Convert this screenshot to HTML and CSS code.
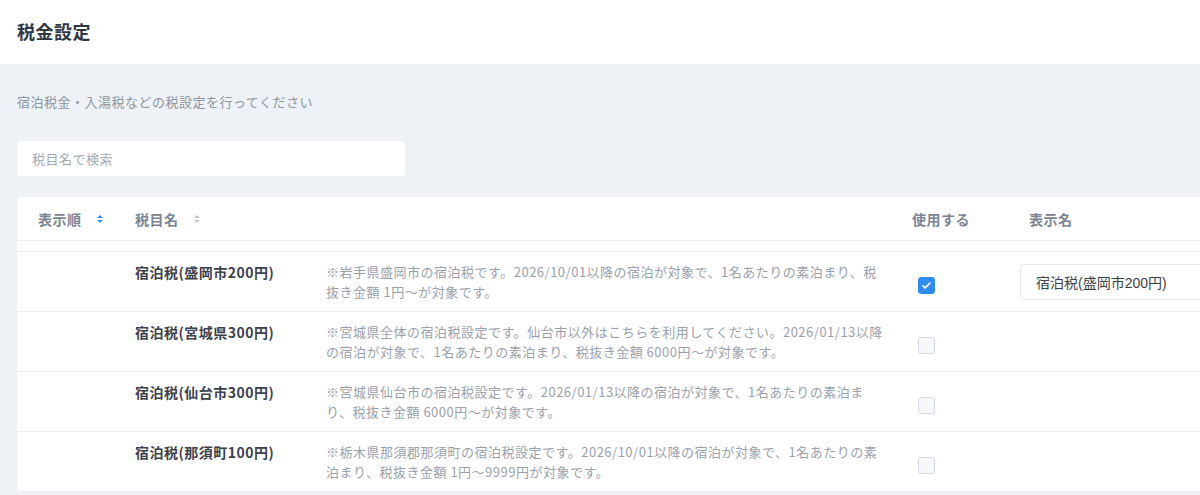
FILE: index.html
```html
<!DOCTYPE html>
<html lang="ja">
<head>
    <meta charset="UTF-8">
    <meta name="viewport" content="width=device-width, initial-scale=1.0">
    <title>税金設定</title>
    <link rel="stylesheet" href="styles.css">
</head>
<body>
    <header class="page-header">
        <h1 class="page-title">税金設定</h1>
    </header>

    <main class="page-body">
        <p class="page-lead">宿泊税金・入湯税などの税設定を行ってください</p>

        <input class="search-input" type="text" placeholder="税目名で検索">

        <div class="tax-card">
            <div class="tax-row tax-head">
                <div class="cell cell-order">表示順 <span class="sort-icon active"></span></div>
                <div class="cell cell-name">税目名 <span class="sort-icon"></span></div>
                <div class="cell cell-desc"></div>
                <div class="cell cell-use">使用する</div>
                <div class="cell cell-label">表示名</div>
            </div>

            <div class="tax-body">
                <div class="tax-row">
                    <div class="cell cell-order"></div>
                    <div class="cell cell-name">宿泊税(盛岡市200円)</div>
                    <div class="cell cell-desc">※岩手県盛岡市の宿泊税です。2026/10/01以降の宿泊が対象で、1名あたりの素泊まり、税抜き金額 1円～が対象です。</div>
                    <div class="cell cell-use">
                        <span class="checkbox checked">
                            <svg viewBox="0 0 16 16" width="11" height="11"><path d="M3 8.5l3 3 7-7" fill="none" stroke="#fff" stroke-width="2.4" stroke-linecap="round" stroke-linejoin="round"/></svg>
                        </span>
                    </div>
                    <div class="cell cell-label">
                        <input class="label-input" type="text" value="宿泊税(盛岡市200円)">
                    </div>
                </div>

                <div class="tax-row">
                    <div class="cell cell-order"></div>
                    <div class="cell cell-name">宿泊税(宮城県300円)</div>
                    <div class="cell cell-desc">※宮城県全体の宿泊税設定です。仙台市以外はこちらを利用してください。2026/01/13以降の宿泊が対象で、1名あたりの素泊まり、税抜き金額 6000円～が対象です。</div>
                    <div class="cell cell-use"><span class="checkbox"></span></div>
                    <div class="cell cell-label"></div>
                </div>

                <div class="tax-row">
                    <div class="cell cell-order"></div>
                    <div class="cell cell-name">宿泊税(仙台市300円)</div>
                    <div class="cell cell-desc">※宮城県仙台市の宿泊税設定です。2026/01/13以降の宿泊が対象で、1名あたりの素泊まり、税抜き金額 6000円～が対象です。</div>
                    <div class="cell cell-use"><span class="checkbox"></span></div>
                    <div class="cell cell-label"></div>
                </div>

                <div class="tax-row">
                    <div class="cell cell-order"></div>
                    <div class="cell cell-name">宿泊税(那須町100円)</div>
                    <div class="cell cell-desc">※栃木県那須郡那須町の宿泊税設定です。2026/10/01以降の宿泊が対象で、1名あたりの素泊まり、税抜き金額 1円～9999円が対象です。</div>
                    <div class="cell cell-use"><span class="checkbox"></span></div>
                    <div class="cell cell-label"></div>
                </div>
            </div>
        </div>
    </main>
</body>
</html>
```

FILE: styles.css
```css
* {
    margin: 0;
    padding: 0;
    box-sizing: border-box;
    font-family: 'Noto Sans CJK JP', 'Noto Sans', sans-serif;
    letter-spacing: 0.5px;
}

body {
    background-color: #eef1f5;
    overflow: hidden;
    min-height: 100vh;
}

.page-header {
    height: 64px;
    background-color: #fff;
    display: flex;
    align-items: center;
    padding-left: 17px;
}

.page-title {
    font-size: 18px;
    font-weight: 700;
    color: #2f3744;
    margin-top: -2px;
}

.page-body {
    padding: 28px 0 0 17px;
}

.page-lead {
    font-size: 13px;
    line-height: 20px;
    color: #8c95a2;
}

.search-input {
    display: block;
    width: 388px;
    height: 35px;
    margin-top: 29px;
    padding: 0 15px;
    border: none;
    border-radius: 4px;
    background-color: #fff;
    font-size: 13px;
    color: #333;
}

.search-input::placeholder {
    color: #a3aab5;
}

.search-input:focus {
    outline: none;
}

/* the table runs on past the right edge of the window */
.tax-card {
    margin-top: 21px;
    background-color: #fff;
    border-radius: 4px 0 0 4px;
    overflow: hidden;
}

.tax-row {
    display: grid;
    grid-template-columns: 101px 191px 586px 117px 1fr;
}

.cell {
    padding-left: 17px;
    min-width: 0;
}

.cell-order {
    padding-left: 21px;
}

/* header */
.tax-head {
    height: 44px;
    align-items: center;
    border-bottom: 1px solid #eef0f3;
}

.tax-head .cell {
    font-size: 14px;
    font-weight: 700;
    color: #7b8492;
    display: flex;
    align-items: center;
}

.sort-icon {
    display: inline-flex;
    flex-direction: column;
    gap: 2px;
    margin-left: 15px;
}

.sort-icon::before,
.sort-icon::after {
    content: "";
    width: 0;
    height: 0;
    border-left: 3px solid transparent;
    border-right: 3px solid transparent;
}

.sort-icon::before {
    border-bottom: 3px solid #c3c8cf;
}

.sort-icon::after {
    border-top: 3px solid #c3c8cf;
}

.sort-icon.active::before {
    border-bottom-color: #2d8cf0;
}

.sort-icon.active::after {
    border-top-color: #2d8cf0;
}

/* body */
.tax-body {
    margin-top: 10px;
    border-top: 1px solid #eef0f3;
}

.tax-body .tax-row {
    height: 60px;
    border-bottom: 1px solid #eef0f3;
}

.tax-body .cell {
    padding-top: 10px;
}

.cell-name {
    font-size: 14px;
    font-weight: 700;
    line-height: 20px;
    color: #3b414c;
}

.cell-desc {
    font-size: 13px;
    line-height: 20px;
    color: #9aa1ac;
    padding-right: 7px;
}

.tax-body .cell-use {
    padding: 0 0 0 23px;
    display: flex;
    align-items: center;
}

.checkbox {
    width: 17px;
    height: 17px;
    margin-top: 7px;
    border-radius: 3px;
    border: 1px solid #d6dae0;
    background-color: #f6f7f9;
    display: flex;
    align-items: center;
    justify-content: center;
}

.checkbox.checked {
    border-color: #2d8cf0;
    background-color: #2d8cf0;
}

.tax-body .cell-label {
    padding: 0 0 0 8px;
    display: flex;
    align-items: center;
    overflow: hidden;
}

.label-input {
    flex: none;
    width: 230px;
    height: 36px;
    padding: 0 15px;
    border: 1px solid #e4e7ec;
    border-radius: 3px;
    font-family: 'Liberation Sans', 'Noto Sans CJK JP', sans-serif;
    font-size: 14px;
    letter-spacing: 0;
    color: #3a3f47;
    background-color: #fff;
}

.label-input:focus {
    outline: none;
}
```
